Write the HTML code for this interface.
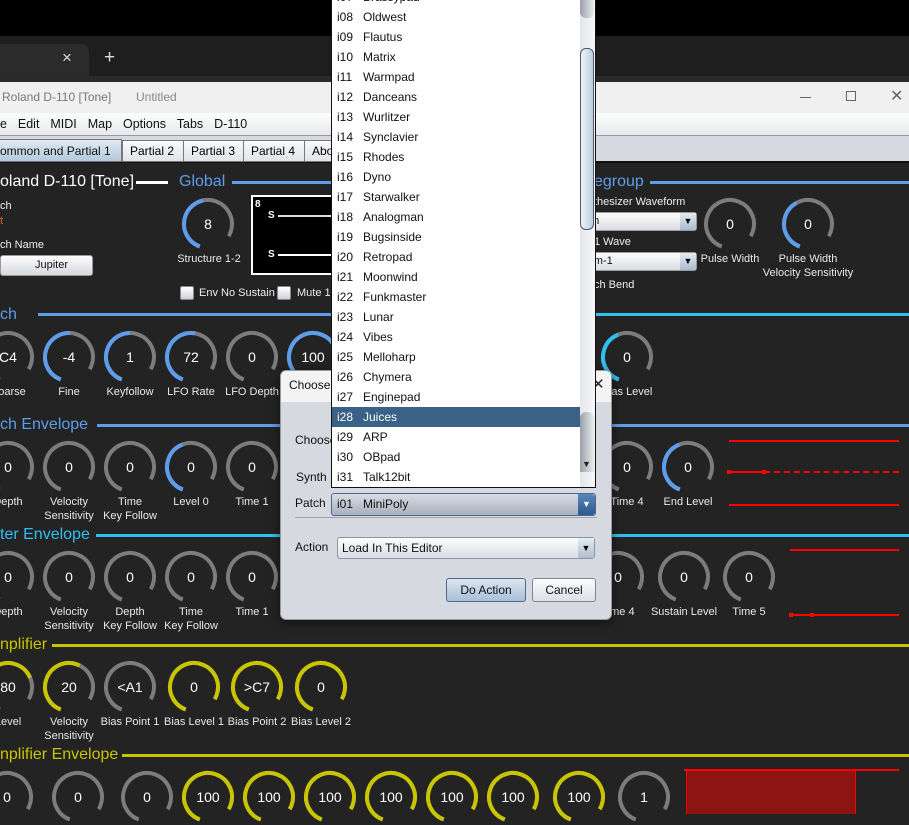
<!DOCTYPE html><html><head><meta charset="utf-8"><style>
*{margin:0;padding:0;box-sizing:border-box}
body{width:909px;height:814px;overflow:hidden;background:#232323;font-family:"Liberation Sans",sans-serif;position:relative}
.a{position:absolute;white-space:nowrap}
.kn{position:absolute;width:56px;height:56px}
.kn svg{position:absolute;left:0;top:0}
.kn circle{fill:none;stroke-width:4;transform:rotate(110deg);transform-origin:28px 28px}
.kn .t{stroke:#7c7c7c;stroke-dasharray:117.3 300}
.kn span{position:absolute;left:0;width:56px;top:20px;text-align:center;color:#fff;font-size:14px}
.lb{position:absolute;width:110px;margin-left:-55px;text-align:center;color:#e8e8e8;font-size:11px;line-height:14px}
.hd{position:absolute;font-size:16px}
.ln{position:absolute;height:3px}
.li{height:20px;line-height:20px;font-size:12px;color:#111;padding-left:5px;white-space:nowrap}
.li b{font-weight:normal;display:inline-block;width:26px}
.cb{position:absolute;width:14px;height:14px;border-radius:2px;background:linear-gradient(#fff,#cfd3da);border:1px solid #888}
</style></head><body>
<div class="a" style="left:0;top:0;width:909px;height:36px;background:#000"></div>
<div class="a" style="left:0;top:36px;width:909px;height:40px;background:#1e1e1e"></div>
<div class="a" style="left:0;top:44px;width:89px;height:32px;background:#2b2b2b;border-radius:0 8px 0 0"></div>
<div class="a" style="left:62px;top:48px;color:#ddd;font-size:17px">×</div>
<div class="a" style="left:104px;top:47px;color:#ddd;font-size:19px">+</div>
<div class="a" style="left:0;top:76px;width:909px;height:6px;background:#2a2a2a"></div>
<div class="a" style="left:0;top:82px;width:909px;height:31px;background:#f0f0f0"></div>
<div class="a" style="left:2px;top:90px;color:#777;font-size:12px">Roland D-110 [Tone]</div>
<div class="a" style="left:136px;top:90px;color:#888;font-size:12px">Untitled</div>
<div class="a" style="left:800px;top:97px;width:11px;height:1px;background:#666"></div>
<div class="a" style="left:846px;top:91px;width:10px;height:10px;border:1px solid #666"></div>
<div class="a" style="left:890px;top:86px;color:#666;font-size:16px">✕</div>
<div class="a" style="left:0;top:113px;width:909px;height:23px;background:linear-gradient(#fdfdfd,#e6e8ec);border-bottom:1px solid #999"></div>
<div class="a" style="left:0;top:117px;color:#111;font-size:12.5px;word-spacing:2px">e&nbsp; Edit&nbsp; MIDI&nbsp; Map&nbsp; Options&nbsp; Tabs&nbsp; D-110</div>
<div class="a" style="left:0;top:136px;width:909px;height:27px;background:#d6d9e0;border-bottom:2px solid #111"></div>
<div class="a" style="left:0;top:139px;width:122px;height:23px;background:linear-gradient(#dfe9f3,#b3c9dc);border:1px solid #777;border-left:0;font-size:12px;line-height:22px;color:#111">ommon and Partial 1</div>
<div class="a" style="left:122px;top:140px;width:62px;height:22px;background:linear-gradient(#fafafa,#e1e3e8);border:1px solid #777;font-size:12px;line-height:21px;padding-left:7px">Partial 2</div>
<div class="a" style="left:183px;top:140px;width:61px;height:22px;background:linear-gradient(#fafafa,#e1e3e8);border:1px solid #777;font-size:12px;line-height:21px;padding-left:7px">Partial 3</div>
<div class="a" style="left:243px;top:140px;width:62px;height:22px;background:linear-gradient(#fafafa,#e1e3e8);border:1px solid #777;font-size:12px;line-height:21px;padding-left:7px">Partial 4</div>
<div class="a" style="left:304px;top:140px;width:60px;height:22px;background:linear-gradient(#fafafa,#e1e3e8);border:1px solid #777;font-size:12px;line-height:21px;padding-left:7px">About</div>

<div class="hd" style="left:0;top:173px;color:#fff">oland D-110 [Tone]</div>
<div class="ln" style="left:136px;top:181px;width:32px;background:#fff"></div>
<div class="hd" style="left:179px;top:173px;color:#5e9cec">Global</div>
<div class="ln" style="left:232px;top:181px;width:110px;background:#5e9cec"></div>
<div class="hd" style="left:594px;top:173px;color:#5e9cec">egroup</div>
<div class="ln" style="left:650px;top:181px;width:259px;background:#5e9cec"></div>
<div class="a" style="left:0;top:200px;color:#eee;font-size:11px">ch</div>
<div class="a" style="left:0;top:215px;color:#e06020;font-size:11px">t</div>
<div class="a" style="left:0;top:239px;color:#eee;font-size:11px">ch Name</div>
<div class="a" style="left:0;top:255px;width:93px;height:21px;background:linear-gradient(#fdfdfd,#d5d8de);border:1px solid #999;border-radius:3px;font-size:11px;line-height:19px;text-align:center;color:#111;padding-left:10px">Jupiter</div>
<div class="a" style="left:251px;top:195px;width:100px;height:80px;background:#000;border:2px solid #fff"></div>
<div class="a" style="left:255px;top:199px;color:#fff;font-size:10px;font-weight:bold">8</div>
<div class="a" style="left:268px;top:210px;color:#fff;font-size:10px;font-weight:bold">S</div>
<div class="a" style="left:278px;top:215px;width:60px;height:2px;background:#ddd"></div>
<div class="a" style="left:268px;top:249px;color:#fff;font-size:10px;font-weight:bold">S</div>
<div class="a" style="left:278px;top:254px;width:60px;height:2px;background:#fff"></div>
<div class="cb" style="left:180px;top:286px"></div>
<div class="a" style="left:199px;top:287px;color:#eee;font-size:11px">Env No Sustain</div>
<div class="cb" style="left:277px;top:286px"></div>
<div class="a" style="left:297px;top:287px;color:#eee;font-size:11px">Mute 1</div>
<div class="a" style="left:594px;top:196px;color:#eee;font-size:11px">thesizer Waveform</div>
<div class="a" style="left:583px;top:212px;width:114px;height:19px;background:linear-gradient(#fdfdfd,#dadde2);border:1px solid #999;border-radius:3px;font-size:11px;line-height:17px;color:#111">oth</div>
<div class="a" style="left:680px;top:213px;width:16px;height:17px;background:linear-gradient(#e4ebf3,#aabccf);font-size:9px;text-align:center;line-height:17px">▼</div>
<div class="a" style="left:594px;top:236px;color:#eee;font-size:11px">1 Wave</div>
<div class="a" style="left:583px;top:252px;width:114px;height:19px;background:linear-gradient(#fdfdfd,#dadde2);border:1px solid #999;border-radius:3px;font-size:11px;line-height:17px;color:#111">rum-1</div>
<div class="a" style="left:680px;top:253px;width:16px;height:17px;background:linear-gradient(#e4ebf3,#aabccf);font-size:9px;text-align:center;line-height:17px">▼</div>
<div class="a" style="left:594px;top:279px;color:#eee;font-size:11px">ch Bend</div>

<div class="hd" style="left:0;top:306px;color:#5e9cec">ch</div>
<div class="ln" style="left:38px;top:313px;width:871px;background:#5e9cec"></div>
<div class="ln" style="left:560px;top:313px;width:349px;background:#2ec0f0"></div>
<div class="hd" style="left:0;top:416px;color:#5e9cec">ch Envelope</div>
<div class="ln" style="left:97px;top:424px;width:812px;background:#5e9cec"></div>
<div class="hd" style="left:0;top:526px;color:#2ec0f0">ter Envelope</div>
<div class="ln" style="left:96px;top:534px;width:813px;background:#2ec0f0"></div>
<div class="hd" style="left:0;top:636px;color:#c8c400">nplifier</div>
<div class="ln" style="left:52px;top:644px;width:857px;background:#c8c400"></div>
<div class="hd" style="left:0;top:746px;color:#c8c400">nplifier Envelope</div>
<div class="ln" style="left:122px;top:754px;width:787px;background:#c8c400"></div>

<div class="kn" style="left:180px;top:196px"><svg width="56" height="56"><circle class="t" cx="28" cy="28" r="24"/><circle cx="28" cy="28" r="24" style="stroke:#5e9cec;stroke-dasharray:62 300"/></svg><span>8</span></div>
<div class="lb" style="left:209px;top:252px">Structure 1-2</div>
<div class="kn" style="left:702px;top:196px"><svg width="56" height="56"><circle class="t" cx="28" cy="28" r="24"/></svg><span>0</span></div>
<div class="lb" style="left:730px;top:252px">Pulse Width</div>
<div class="kn" style="left:780px;top:196px"><svg width="56" height="56"><circle class="t" cx="28" cy="28" r="24"/><circle cx="28" cy="28" r="24" style="stroke:#5e9cec;stroke-dasharray:55 300"/></svg><span>0</span></div>
<div class="lb" style="left:808px;top:252px">Pulse Width<br>Velocity Sensitivity</div>

<div class="kn" style="left:-20px;top:329px"><svg width="56" height="56"><circle class="t" cx="28" cy="28" r="24"/><circle cx="28" cy="28" r="24" style="stroke:#5e9cec;stroke-dasharray:20 300"/></svg><span>C4</span></div>
<div class="lb" style="left:8px;top:385px">Coarse</div>
<div class="kn" style="left:41px;top:329px"><svg width="56" height="56"><circle class="t" cx="28" cy="28" r="24"/><circle cx="28" cy="28" r="24" style="stroke:#5e9cec;stroke-dasharray:68 300"/></svg><span>-4</span></div>
<div class="lb" style="left:69px;top:385px">Fine</div>
<div class="kn" style="left:102px;top:329px"><svg width="56" height="56"><circle class="t" cx="28" cy="28" r="24"/><circle cx="28" cy="28" r="24" style="stroke:#5e9cec;stroke-dasharray:67 300"/></svg><span>1</span></div>
<div class="lb" style="left:130px;top:385px">Keyfollow</div>
<div class="kn" style="left:163px;top:329px"><svg width="56" height="56"><circle class="t" cx="28" cy="28" r="24"/><circle cx="28" cy="28" r="24" style="stroke:#5e9cec;stroke-dasharray:71 300"/></svg><span>72</span></div>
<div class="lb" style="left:191px;top:385px">LFO Rate</div>
<div class="kn" style="left:224px;top:329px"><svg width="56" height="56"><circle class="t" cx="28" cy="28" r="24"/></svg><span>0</span></div>
<div class="lb" style="left:252px;top:385px">LFO Depth</div>
<div class="kn" style="left:285px;top:329px"><svg width="56" height="56"><circle class="t" cx="28" cy="28" r="24"/><circle cx="28" cy="28" r="24" style="stroke:#5e9cec;stroke-dasharray:117 300"/></svg><span>100</span></div>
<div class="kn" style="left:599px;top:329px"><svg width="56" height="56"><circle class="t" cx="28" cy="28" r="24"/><circle cx="28" cy="28" r="24" style="stroke:#2ec0f0;stroke-dasharray:58 300"/></svg><span>0</span></div>
<div class="lb" style="left:627px;top:385px">Bias Level</div>

<div class="kn" style="left:-20px;top:439px"><svg width="56" height="56"><circle class="t" cx="28" cy="28" r="24"/></svg><span>0</span></div>
<div class="lb" style="left:8px;top:495px">Depth</div>
<div class="kn" style="left:41px;top:439px"><svg width="56" height="56"><circle class="t" cx="28" cy="28" r="24"/></svg><span>0</span></div>
<div class="lb" style="left:69px;top:495px">Velocity<br>Sensitivity</div>
<div class="kn" style="left:102px;top:439px"><svg width="56" height="56"><circle class="t" cx="28" cy="28" r="24"/></svg><span>0</span></div>
<div class="lb" style="left:130px;top:495px">Time<br>Key Follow</div>
<div class="kn" style="left:163px;top:439px"><svg width="56" height="56"><circle class="t" cx="28" cy="28" r="24"/><circle cx="28" cy="28" r="24" style="stroke:#5e9cec;stroke-dasharray:58 300"/></svg><span>0</span></div>
<div class="lb" style="left:191px;top:495px">Level 0</div>
<div class="kn" style="left:224px;top:439px"><svg width="56" height="56"><circle class="t" cx="28" cy="28" r="24"/></svg><span>0</span></div>
<div class="lb" style="left:252px;top:495px">Time 1</div>
<div class="kn" style="left:599px;top:439px"><svg width="56" height="56"><circle class="t" cx="28" cy="28" r="24"/></svg><span>0</span></div>
<div class="lb" style="left:627px;top:495px">Time 4</div>
<div class="kn" style="left:660px;top:439px"><svg width="56" height="56"><circle class="t" cx="28" cy="28" r="24"/><circle cx="28" cy="28" r="24" style="stroke:#5e9cec;stroke-dasharray:58 300"/></svg><span>0</span></div>
<div class="lb" style="left:688px;top:495px">End Level</div>
<div class="a" style="left:729px;top:440px;width:170px;height:2px;background:#f00"></div>
<div class="a" style="left:729px;top:471px;width:35px;height:2px;background:#f00"></div>
<div class="a" style="left:764px;top:471px;width:135px;height:0;border-top:2px dashed #f00"></div>
<div class="a" style="left:727px;top:470px;width:4px;height:4px;background:#f00"></div>
<div class="a" style="left:762px;top:470px;width:4px;height:4px;background:#f00"></div>
<div class="a" style="left:729px;top:504px;width:170px;height:2px;background:#f00"></div>

<div class="kn" style="left:-20px;top:549px"><svg width="56" height="56"><circle class="t" cx="28" cy="28" r="24"/></svg><span>0</span></div>
<div class="lb" style="left:8px;top:605px">Depth</div>
<div class="kn" style="left:41px;top:549px"><svg width="56" height="56"><circle class="t" cx="28" cy="28" r="24"/></svg><span>0</span></div>
<div class="lb" style="left:69px;top:605px">Velocity<br>Sensitivity</div>
<div class="kn" style="left:102px;top:549px"><svg width="56" height="56"><circle class="t" cx="28" cy="28" r="24"/></svg><span>0</span></div>
<div class="lb" style="left:130px;top:605px">Depth<br>Key Follow</div>
<div class="kn" style="left:163px;top:549px"><svg width="56" height="56"><circle class="t" cx="28" cy="28" r="24"/></svg><span>0</span></div>
<div class="lb" style="left:191px;top:605px">Time<br>Key Follow</div>
<div class="kn" style="left:224px;top:549px"><svg width="56" height="56"><circle class="t" cx="28" cy="28" r="24"/></svg><span>0</span></div>
<div class="lb" style="left:252px;top:605px">Time 1</div>
<div class="kn" style="left:590px;top:549px"><svg width="56" height="56"><circle class="t" cx="28" cy="28" r="24"/></svg><span>0</span></div>
<div class="lb" style="left:618px;top:605px">Time 4</div>
<div class="kn" style="left:656px;top:549px"><svg width="56" height="56"><circle class="t" cx="28" cy="28" r="24"/></svg><span>0</span></div>
<div class="lb" style="left:684px;top:605px">Sustain Level</div>
<div class="kn" style="left:721px;top:549px"><svg width="56" height="56"><circle class="t" cx="28" cy="28" r="24"/></svg><span>0</span></div>
<div class="lb" style="left:749px;top:605px">Time 5</div>
<div class="a" style="left:790px;top:549px;width:109px;height:2px;background:#f00"></div>
<div class="a" style="left:790px;top:614px;width:109px;height:2px;background:#f00"></div>
<div class="a" style="left:789px;top:613px;width:4px;height:4px;background:#f00"></div>
<div class="a" style="left:810px;top:613px;width:4px;height:4px;background:#f00"></div>

<div class="kn" style="left:-20px;top:659px"><svg width="56" height="56"><circle class="t" cx="28" cy="28" r="24"/><circle cx="28" cy="28" r="24" style="stroke:#c8c400;stroke-dasharray:95 300"/></svg><span>80</span></div>
<div class="lb" style="left:8px;top:715px">Level</div>
<div class="kn" style="left:41px;top:659px"><svg width="56" height="56"><circle class="t" cx="28" cy="28" r="24"/><circle cx="28" cy="28" r="24" style="stroke:#c8c400;stroke-dasharray:78 300"/></svg><span>20</span></div>
<div class="lb" style="left:69px;top:715px">Velocity<br>Sensitivity</div>
<div class="kn" style="left:102px;top:659px"><svg width="56" height="56"><circle class="t" cx="28" cy="28" r="24"/></svg><span>&lt;A1</span></div>
<div class="lb" style="left:130px;top:715px">Bias Point 1</div>
<div class="kn" style="left:166px;top:659px"><svg width="56" height="56"><circle class="t" cx="28" cy="28" r="24"/><circle cx="28" cy="28" r="24" style="stroke:#c8c400;stroke-dasharray:117.3 300"/></svg><span>0</span></div>
<div class="lb" style="left:194px;top:715px">Bias Level 1</div>
<div class="kn" style="left:229px;top:659px"><svg width="56" height="56"><circle class="t" cx="28" cy="28" r="24"/><circle cx="28" cy="28" r="24" style="stroke:#c8c400;stroke-dasharray:117.3 300"/></svg><span>&gt;C7</span></div>
<div class="lb" style="left:257px;top:715px">Bias Point 2</div>
<div class="kn" style="left:293px;top:659px"><svg width="56" height="56"><circle class="t" cx="28" cy="28" r="24"/><circle cx="28" cy="28" r="24" style="stroke:#c8c400;stroke-dasharray:117.3 300"/></svg><span>0</span></div>
<div class="lb" style="left:321px;top:715px">Bias Level 2</div>

<div class="kn" style="left:-21px;top:769px"><svg width="56" height="56"><circle class="t" cx="28" cy="28" r="24"/></svg><span>0</span></div>
<div class="kn" style="left:50px;top:769px"><svg width="56" height="56"><circle class="t" cx="28" cy="28" r="24"/></svg><span>0</span></div>
<div class="kn" style="left:119px;top:769px"><svg width="56" height="56"><circle class="t" cx="28" cy="28" r="24"/></svg><span>0</span></div>
<div class="kn" style="left:180px;top:769px"><svg width="56" height="56"><circle class="t" cx="28" cy="28" r="24"/><circle cx="28" cy="28" r="24" style="stroke:#c8c400;stroke-dasharray:117.3 300"/></svg><span>100</span></div>
<div class="kn" style="left:241px;top:769px"><svg width="56" height="56"><circle class="t" cx="28" cy="28" r="24"/><circle cx="28" cy="28" r="24" style="stroke:#c8c400;stroke-dasharray:117.3 300"/></svg><span>100</span></div>
<div class="kn" style="left:302px;top:769px"><svg width="56" height="56"><circle class="t" cx="28" cy="28" r="24"/><circle cx="28" cy="28" r="24" style="stroke:#c8c400;stroke-dasharray:117.3 300"/></svg><span>100</span></div>
<div class="kn" style="left:363px;top:769px"><svg width="56" height="56"><circle class="t" cx="28" cy="28" r="24"/><circle cx="28" cy="28" r="24" style="stroke:#c8c400;stroke-dasharray:117.3 300"/></svg><span>100</span></div>
<div class="kn" style="left:424px;top:769px"><svg width="56" height="56"><circle class="t" cx="28" cy="28" r="24"/><circle cx="28" cy="28" r="24" style="stroke:#c8c400;stroke-dasharray:117.3 300"/></svg><span>100</span></div>
<div class="kn" style="left:485px;top:769px"><svg width="56" height="56"><circle class="t" cx="28" cy="28" r="24"/><circle cx="28" cy="28" r="24" style="stroke:#c8c400;stroke-dasharray:117.3 300"/></svg><span>100</span></div>
<div class="kn" style="left:551px;top:769px"><svg width="56" height="56"><circle class="t" cx="28" cy="28" r="24"/><circle cx="28" cy="28" r="24" style="stroke:#c8c400;stroke-dasharray:117.3 300"/></svg><span>100</span></div>
<div class="kn" style="left:616px;top:769px"><svg width="56" height="56"><circle class="t" cx="28" cy="28" r="24"/></svg><span>1</span></div>
<div class="a" style="left:686px;top:770px;width:170px;height:44px;background:#8e1414;border-left:1px solid #f00;border-right:1px solid #f00"></div>
<div class="a" style="left:684px;top:769px;width:215px;height:2px;background:#f00"></div>

<div class="a" style="left:280px;top:370px;width:332px;height:250px;background:#d6d9e0;border:1px solid #999;border-radius:6px;overflow:hidden;box-shadow:0 2px 10px rgba(0,0,0,.5)">
<div style="height:31px;background:#f3f3f3"></div></div>
<div class="a" style="left:289px;top:378px;font-size:12px;color:#111">Choose</div>
<div class="a" style="left:592px;top:375px;font-size:15px;color:#222">✕</div>
<div class="a" style="left:295px;top:433px;font-size:12px;color:#111">Choose</div>
<div class="a" style="left:296px;top:470px;font-size:12px;color:#111">Synth</div>
<div class="a" style="left:295px;top:496px;font-size:12px;color:#111">Patch</div>
<div class="a" style="left:331px;top:493px;width:265px;height:23px;background:linear-gradient(#d8dce4,#a9b0bd);border:1px solid #4a6a90;border-radius:3px;font-size:12px;line-height:21px;padding-left:5px;color:#111"><b style="font-weight:normal;display:inline-block;width:26px">i01</b>MiniPoly</div>
<div class="a" style="left:578px;top:494px;width:17px;height:21px;background:linear-gradient(#5a86b8,#2c5a8c);color:#fff;font-size:9px;text-align:center;line-height:21px;border-radius:0 3px 3px 0">▼</div>
<div class="a" style="left:295px;top:517px;width:302px;height:1px;background:#a0a4ac"></div>
<div class="a" style="left:295px;top:540px;font-size:12px;color:#111">Action</div>
<div class="a" style="left:337px;top:537px;width:258px;height:22px;background:linear-gradient(#fdfdfd,#dadde3);border:1px solid #8b95a3;border-radius:3px;font-size:12px;line-height:20px;padding-left:4px;color:#111">Load In This Editor</div>
<div class="a" style="left:578px;top:538px;width:16px;height:20px;background:linear-gradient(#e6ecf3,#aebfd1);font-size:9px;text-align:center;line-height:20px">▼</div>
<div class="a" style="left:446px;top:578px;width:80px;height:24px;background:linear-gradient(#dbe6f1,#a8bfd6);border:1px solid #4f6a88;border-radius:3px;font-size:12px;line-height:22px;text-align:center;color:#111">Do Action</div>
<div class="a" style="left:532px;top:578px;width:64px;height:24px;background:linear-gradient(#fdfdfd,#dcdfe4);border:1px solid #7d8794;border-radius:3px;font-size:12px;line-height:22px;text-align:center;color:#111">Cancel</div>

<div class="a" style="left:331px;top:0;width:265px;height:488px;background:#fff;border:1px solid #111;border-top:0"></div>
<div class="a" style="left:580px;top:0;width:15px;height:487px;background:linear-gradient(90deg,#e4e6ea,#f6f7f9)"></div>
<div class="a" style="left:580px;top:0;width:14px;height:18px;background:linear-gradient(90deg,#9aa0a8,#e8ebef);border-radius:0 0 6px 6px"></div>
<div class="a" style="left:580px;top:48px;width:14px;height:182px;background:linear-gradient(90deg,#eef4fa,#b8cee2);border:1px solid #556;border-radius:6px"></div>
<div class="a" style="left:580px;top:412px;width:14px;height:60px;background:linear-gradient(90deg,#9aa0a8,#e8ebef);border-radius:6px 6px 0 0"></div>
<div class="a" style="left:582px;top:459px;font-size:9px;color:#222">▼</div>
<div class="a" style="left:332px;top:-13px;width:248px">
<div class="li"><b>i07</b>Brassypad</div>
<div class="li"><b>i08</b>Oldwest</div>
<div class="li"><b>i09</b>Flautus</div>
<div class="li"><b>i10</b>Matrix</div>
<div class="li"><b>i11</b>Warmpad</div>
<div class="li"><b>i12</b>Danceans</div>
<div class="li"><b>i13</b>Wurlitzer</div>
<div class="li"><b>i14</b>Synclavier</div>
<div class="li"><b>i15</b>Rhodes</div>
<div class="li"><b>i16</b>Dyno</div>
<div class="li"><b>i17</b>Starwalker</div>
<div class="li"><b>i18</b>Analogman</div>
<div class="li"><b>i19</b>Bugsinside</div>
<div class="li"><b>i20</b>Retropad</div>
<div class="li"><b>i21</b>Moonwind</div>
<div class="li"><b>i22</b>Funkmaster</div>
<div class="li"><b>i23</b>Lunar</div>
<div class="li"><b>i24</b>Vibes</div>
<div class="li"><b>i25</b>Melloharp</div>
<div class="li"><b>i26</b>Chymera</div>
<div class="li"><b>i27</b>Enginepad</div>
<div class="li" style="background:#3a6186;color:#fff"><b>i28</b>Juices</div>
<div class="li"><b>i29</b>ARP</div>
<div class="li"><b>i30</b>OBpad</div>
<div class="li"><b>i31</b>Talk12bit</div>
</div>
</body></html>
